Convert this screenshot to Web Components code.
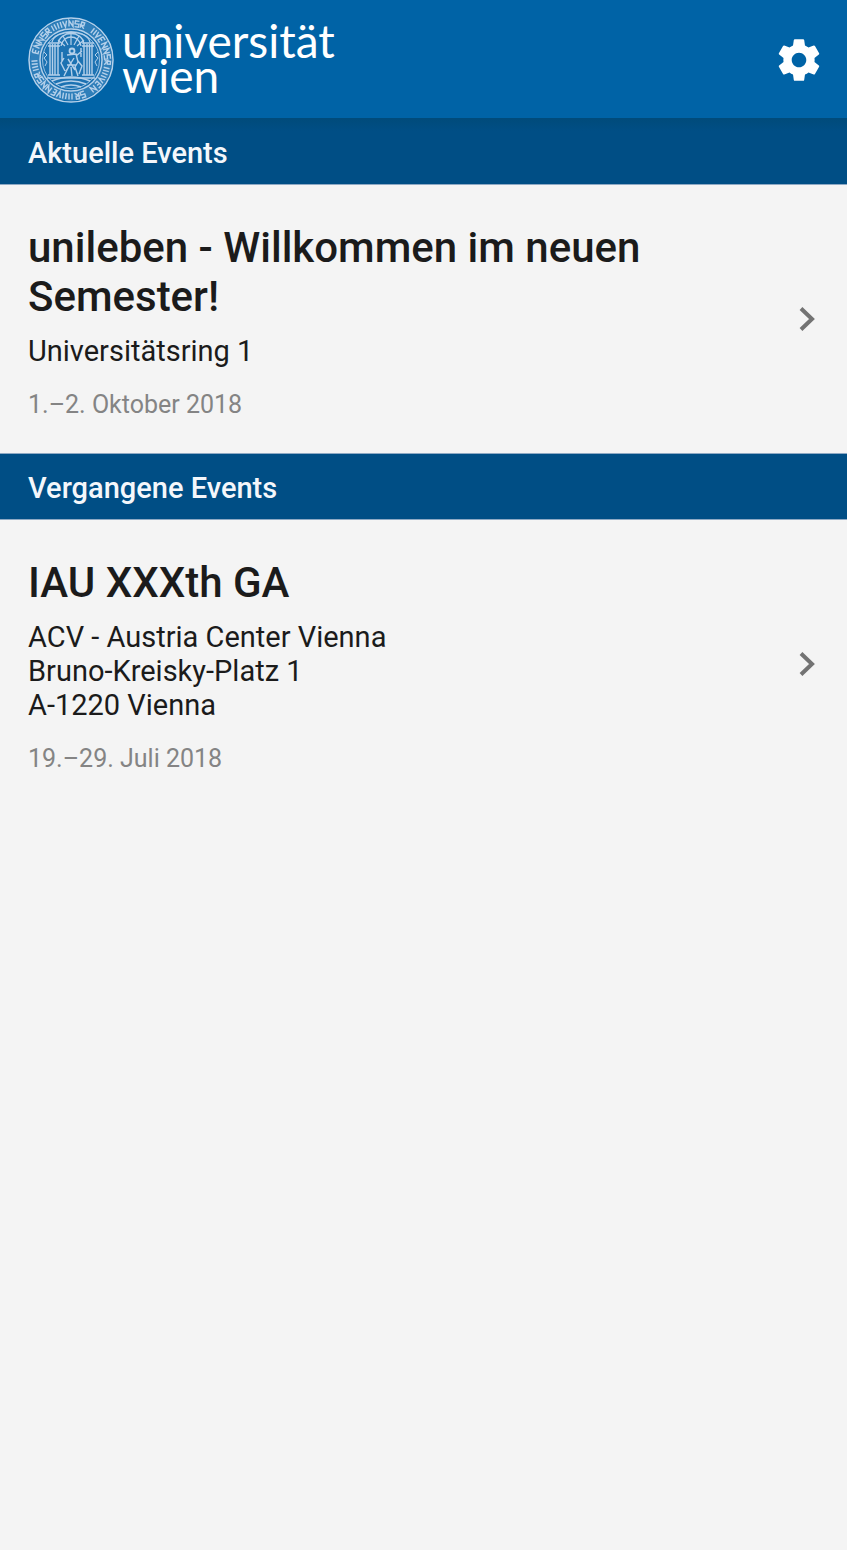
<!DOCTYPE html>
<html lang="de">
<head>
<meta charset="utf-8">
<meta name="viewport" content="width=device-width, initial-scale=1">
<title>Universität Wien Events</title>
<style>
  body {
    margin: 0;
    background: #f4f4f4;
    color: #1b1b1b;
    font-family: Roboto, "Liberation Sans", sans-serif;
  }
</style>
</head>
<body>
<app-header>
  <uni-logo></uni-logo>
</app-header>
<main>
  <event-section label="Aktuelle Events" shaded>
    <event-item href="#unileben" date="1.–2. Oktober 2018">
      <span slot="title">unileben - Willkommen im neuen Semester!</span>
      Universitätsring 1
    </event-item>
  </event-section>
  <event-section label="Vergangene Events">
    <event-item href="#iau" date="19.–29. Juli 2018">
      <span slot="title">IAU XXXth GA</span>
      ACV - Austria Center Vienna<br>
      Bruno-Kreisky-Platz 1<br>
      A-1220 Vienna
    </event-item>
  </event-section>
</main>

<script>
const UniLogoTemplate = document.createElement("template");
UniLogoTemplate.innerHTML = `
    <style>
        :host { display: block; }
        .logo {
            display: flex;
            align-items: center;
            column-gap: 8px;
            color: #fff;
            text-decoration: none;
        }
        svg { display: block; width: 86px; height: 86px; flex: none; }
        .name {
            font-family: Lato, "Open Sans", sans-serif;
            font-size: 46px;
            line-height: 35px;
            padding-bottom: 4px;
        }
        .name span { display: block; }
    </style>
    <a class="logo" href="#" aria-label="universität wien">
      <svg viewBox="0 0 86 86" fill="none" stroke="#b4d0ea" aria-hidden="true">
        <circle cx="43" cy="43" r="36" stroke="#2f7fba" stroke-width="10"/>
        <circle cx="43" cy="43" r="30" fill="#1c72b2" stroke="none"/>
        <circle cx="43" cy="43" r="42" stroke-width="1.5"/>
        <circle cx="43" cy="43" r="31" stroke-width="1.5"/>
        <circle cx="43" cy="43" r="28.500" stroke-width=".8"/>
        <g class="ring" stroke-width="1.4"></g>
        <path d="M22 27v31M24.500 27v31M27 27v31M30 27v31M56 27v31M59 27v31M61.500 27v31M64 27v31" stroke-width="1.4"/>
        <path d="M20 26h12M54 26h12M20 29h12M54 29h12M20 58h12M54 58h12M19 61h48" stroke-width="1.5"/>
        <path d="M24 25c3-13 35-13 38 0M30 27c2-14 24-14 26 0M33 29c2-12 18-12 20 0" stroke-width="1.3"/>
        <path d="M43 28V17M40 28l-5-9M46 28l5-9M37 29l-7-6M49 29l7-6" stroke-width="1.2"/>
        <circle cx="44" cy="34" r="2.500" stroke-width="1.8"/>
        <path d="M39 38l9-1 2 8-3 5 3 9M42 47l-6 12M36 41l-3 5 4 8M48 39l6-5M50 44l4 5-3 8M40 42l7 11M46 41l-8 13M34 35v9M53 31v9M43 50l1 9M39 48h9" stroke-width="1.4"/>
        <path d="M24 64q19-8 38 0M28 67q15-6 30 0M33 70q10-4 20 0" stroke-width="1.4"/>
        <path d="M16 35l3 3-3 3 3 4-2 4M70 35l-3 3 3 3-3 4 2 4" stroke-width="1"/>
      </svg>
      <span class="name"><span>universität</span><span>wien</span></span>
    </a>
`;

class UniLogo extends HTMLElement {
  constructor() {
    super();
    this.attachShadow({ mode: "open" });
    this.shadowRoot.appendChild(UniLogoTemplate.content.cloneNode(true));
  }

  connectedCallback() {
    this.drawRing();
  }

  // small engraved marks between the two circles of the seal
  drawRing() {
    const _ring = this.shadowRoot.querySelector(".ring");
    const marks = ["M-2 3V-3L2 3V-3", "M-2-3v6h3M-2-3h4M-2 0h3", "M-2-3L0 3 2-3", "M-1-3V3M2-3V3", "M-2 3V-3h3v3h-3l4 3", "M2-3h-4v3h4v3h-4"];
    const count = 38;
    let paths = "";
    for (let i = 0; i < count; i++) {
      if (i % 13 === 3) {
        continue;
      }
      paths += `<path transform="rotate(${(i * 360) / count} 43 43) translate(43 6.500)" d="${marks[(i * 5 + (i >> 2)) % marks.length]}"/>`;
    }
    _ring.innerHTML = paths;
  }
}

customElements.define("uni-logo", UniLogo);

const AppHeaderTemplate = document.createElement("template");
AppHeaderTemplate.innerHTML = `
    <style>
        :host { display: block; }
        header {
            display: flex;
            align-items: center;
            justify-content: space-between;
            box-sizing: border-box;
            min-height: 118px;
            padding: 2px 23px 0 28px;
            background: #0063a6;
        }
        button {
            padding: 0;
            border: 0;
            background: none;
            color: #fff;
            cursor: pointer;
        }
        svg { display: block; width: 50px; height: 50px; }
    </style>
    <header>
      <slot></slot>
      <button type="button" aria-label="Einstellungen">
        <svg viewBox="0 0 24 24" fill="currentColor" aria-hidden="true">
          <path d="M19.430 12.980c.040-.320.070-.640.070-.980s-.030-.660-.070-.980l2.110-1.650c.190-.150.240-.420.120-.640l-2-3.460c-.120-.220-.390-.300-.610-.220l-2.490 1c-.520-.400-1.080-.730-1.690-.980l-.380-2.650C14.460 2.180 14.250 2 14 2h-4c-.250 0-.460.180-.490.420l-.380 2.650c-.610.250-1.170.590-1.690.980l-2.490-1c-.230-.090-.490 0-.610.220l-2 3.460c-.130.220-.070.490.120.640l2.110 1.650c-.040.320-.070.650-.070.980s.030.660.070.980l-2.110 1.650c-.190.150-.240.420-.120.640l2 3.460c.120.220.390.300.610.220l2.490-1c.520.400 1.080.730 1.690.980l.380 2.650c.030.240.240.420.490.420h4c.250 0 .460-.180.490-.420l.380-2.650c.610-.250 1.170-.590 1.690-.980l2.490 1c.230.090.490 0 .610-.220l2-3.460c.120-.220.070-.490-.120-.640l-2.110-1.650zM12 15.500c-1.930 0-3.500-1.570-3.500-3.500s1.570-3.500 3.500-3.500 3.500 1.570 3.500 3.500-1.570 3.500-3.500 3.500z"/>
        </svg>
      </button>
    </header>
`;

class AppHeader extends HTMLElement {
  constructor() {
    super();
    this.attachShadow({ mode: "open" });
    this.shadowRoot.appendChild(AppHeaderTemplate.content.cloneNode(true));
  }
}

customElements.define("app-header", AppHeader);

const EventSectionTemplate = document.createElement("template");
EventSectionTemplate.innerHTML = `
    <style>
        :host { display: block; }
        h2 {
            margin: 0;
            padding: 17px 28px 14px;
            border-top: 1px solid #8ea9c4;
            border-bottom: 1px solid #8ea9c4;
            background: #004e85;
            color: #f4f7fb;
            font-size: 29px;
            font-weight: 500;
            line-height: 34px;
        }
        :host([shaded]) h2 {
            border-top-color: #004b7b;
            background: linear-gradient(#004b7b, #004e85 12px);
        }
    </style>
    <section>
      <h2></h2>
      <slot></slot>
    </section>
`;

class EventSection extends HTMLElement {
  constructor() {
    super();
    this.attachShadow({ mode: "open" });
    this.shadowRoot.appendChild(EventSectionTemplate.content.cloneNode(true));
  }

  connectedCallback() {
    this.shadowRoot.querySelector("h2").textContent = this.getAttribute("label");
  }
}

customElements.define("event-section", EventSection);

const EventItemTemplate = document.createElement("template");
EventItemTemplate.innerHTML = `
    <style>
        :host { display: block; }
        a {
            display: flex;
            align-items: center;
            column-gap: 28px;
            padding: 0 28px;
            color: inherit;
            text-decoration: none;
        }
        .text { flex: 1; max-width: 700px; padding: 38px 0 33px; }
        h3, p { margin: 0; }
        h3 {
            font-size: 42px;
            font-weight: 500;
            line-height: 49px;
        }
        .place {
            margin-top: 13px;
            font-size: 29px;
            line-height: 34px;
        }
        .date {
            margin-top: 22px;
            color: #848484;
            font-size: 25px;
            line-height: 30px;
        }
        svg { display: block; flex: none; width: 24px; height: 28px; margin-left: auto; }
    </style>
    <a>
      <div class="text">
        <h3><slot name="title"></slot></h3>
        <p class="place"><slot></slot></p>
        <p class="date"></p>
      </div>
      <svg viewBox="0 0 24 28" fill="none" stroke="#737373" stroke-width="4" aria-hidden="true">
        <path d="M6 3.500L17 14 6 24.500"/>
      </svg>
    </a>
`;

class EventItem extends HTMLElement {
  constructor() {
    super();
    this.attachShadow({ mode: "open" });
    this.shadowRoot.appendChild(EventItemTemplate.content.cloneNode(true));
  }

  connectedCallback() {
    this.shadowRoot.querySelector("a").href = this.getAttribute("href");
    this.shadowRoot.querySelector(".date").textContent = this.getAttribute("date");
  }
}

customElements.define("event-item", EventItem);
</script>
</body>
</html>
